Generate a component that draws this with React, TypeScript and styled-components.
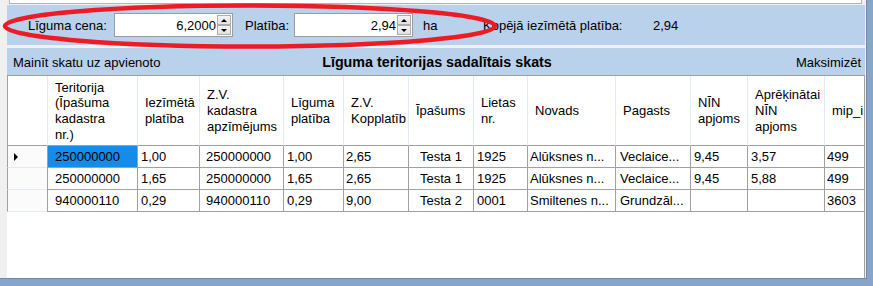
import React from "react";
import styled, { createGlobalStyle } from "styled-components";

const GlobalStyle = createGlobalStyle`
  html, body { margin: 0; padding: 0; }
  body {
    background: #87a5c9;
    font-family: "Liberation Sans", Arial, sans-serif;
    font-size: 13px;
    color: #000;
  }
`;

const COLS = "40px 90px 62px 84px 60px 65px 65px 54px 88px 75px 57px 77px 40px";

const Frame = styled.div`
  position: relative;
  width: 873px;
  height: 286px;
  box-sizing: border-box;
  padding: 0 6px 7px 0;
  background: #87a5c9;
  overflow: hidden;
`;

const Content = styled.div`
  height: 100%;
  box-sizing: border-box;
  background: #f0f0f0;
  border-right: 1px solid #6d8cb4;
  border-bottom: 1px solid #6d8cb4;
  display: flex;
  flex-direction: column;
`;

const TopBox = styled.div`
  flex: none;
  height: 4px;
  box-sizing: border-box;
  margin: 0 4px 0 9px;
  background: #fff;
  border: 1px solid #b4b4b4;
  border-top: none;
`;

const ParamBand = styled.div`
  flex: none;
  height: 40px;
  margin: 1px 1px 0 7px;
  padding-left: 21px;
  background: #b9d1ea;
  display: flex;
  align-items: center;
`;

const Label = styled.span<{ $w?: number; $ml?: number }>`
  flex: none;
  width: ${(p) => (p.$w ? `${p.$w}px` : "auto")};
  margin-left: ${(p) => p.$ml ?? 0}px;
  white-space: nowrap;
  line-height: 16px;
  padding-top: 2px;
`;

const Spin = styled.div<{ $ml?: number }>`
  flex: none;
  width: 119px;
  height: 24px;
  box-sizing: border-box;
  margin-left: ${(p) => p.$ml ?? 0}px;
  border: 1px solid #9c9c9c;
  background: #fff;
  display: flex;
`;

const SpinValue = styled.div`
  flex: 1;
  text-align: right;
  padding-right: 1px;
  line-height: 23px;
`;

const SpinButtons = styled.div`
  flex: none;
  width: 15px;
  display: flex;
  flex-direction: column;
  padding: 1px 1px 1px 0;
  box-sizing: border-box;
`;

const SpinBtn = styled.div`
  flex: 1;
  box-sizing: border-box;
  border: 1px solid #acacac;
  background: linear-gradient(#f4f4f4, #e1e1e1);
  display: flex;
  align-items: center;
  justify-content: center;
`;

const Arrow = styled.span<{ $up?: boolean }>`
  width: 0;
  height: 0;
  border-left: 3px solid transparent;
  border-right: 3px solid transparent;
  ${(p) => (p.$up ? "border-bottom: 3px solid #000;" : "border-top: 3px solid #000;")}
`;

const TitleBand = styled.div`
  flex: none;
  height: 27px;
  margin: 3px 1px 0 7px;
  padding: 0 4px 0 6px;
  background: #b9d1ea;
  display: grid;
  grid-template-columns: 1fr auto 1fr;
  align-items: center;
`;

const TitleLink = styled.span<{ $right?: boolean }>`
  white-space: nowrap;
  text-align: ${(p) => (p.$right ? "right" : "left")};
  padding-top: 1px;
`;

const Title = styled.span`
  font-weight: bold;
  font-size: 14.3px;
  white-space: nowrap;
  padding-top: 1px;
`;

const Grid = styled.div`
  flex: 1;
  margin: 0 1px 0 7px;
  background: #fff;
  border-top: 1px solid #a0a0a0;
  border-right: 1px solid #a0a0a0;
`;

const Row = styled.div<{ $h: number }>`
  display: grid;
  grid-template-columns: ${COLS};
  height: ${(p) => p.$h}px;
`;

const HeadCell = styled.div<{ $edge?: boolean }>`
  box-sizing: border-box;
  border-left: 1px solid ${(p) => (p.$edge ? "#a0a0a0" : "#e3eaf3")};
  border-bottom: 1px solid #a0a0a0;
  padding-left: 7px;
  display: flex;
  flex-direction: column;
  justify-content: center;
  overflow: hidden;
  white-space: nowrap;
  line-height: 15.7px;
  padding-top: 1px;
`;

const RowHead = styled.div`
  box-sizing: border-box;
  border-left: 1px solid #a0a0a0;
  border-bottom: 1px solid #e3eaf3;
  background: #fbfbfb;
  padding-left: 6px;
  display: flex;
  align-items: center;
`;

const Pointer = styled.span`
  width: 0;
  height: 0;
  border-top: 4px solid transparent;
  border-bottom: 4px solid transparent;
  border-left: 4px solid #000;
  margin-top: 1px;
`;

const Cell = styled.div<{ $pl: number; $center?: boolean; $sel?: boolean }>`
  box-sizing: border-box;
  border-left: 1px solid #a0a0a0;
  border-bottom: 1px solid #a0a0a0;
  background: ${(p) => (p.$sel ? "#168cea" : "#fff")};
  padding-left: ${(p) => (p.$center ? 0 : p.$pl)}px;
  text-align: ${(p) => (p.$center ? "center" : "left")};
  line-height: 22px;
  overflow: hidden;
  white-space: nowrap;
`;

const Annotation = styled.svg`
  position: absolute;
  left: 0;
  top: 0;
  width: 873px;
  height: 286px;
  pointer-events: none;
`;

const headers: string[][] = [
  ["Teritorija", "(Īpašuma", "kadastra", "nr.)"],
  ["Iezīmētā", "platība"],
  ["Z.V.", "kadastra", "apzīmējums"],
  ["Līguma", "platība"],
  ["Z.V.", "Kopplatīb"],
  ["Īpašums"],
  ["Lietas", "nr."],
  ["Novads"],
  ["Pagasts"],
  ["NĪN", "apjoms"],
  ["Aprēķinātai", "NĪN", "apjoms"],
  ["mip_i"],
];

const colCfg: { pl: number; center?: boolean }[] = [
  { pl: 7 },
  { pl: 3 },
  { pl: 6 },
  { pl: 3 },
  { pl: 2 },
  { pl: 0, center: true },
  { pl: 3 },
  { pl: 2 },
  { pl: 4 },
  { pl: 3 },
  { pl: 3 },
  { pl: 2 },
];

const rows: { current?: boolean; cells: string[] }[] = [
  {
    current: true,
    cells: ["250000000", "1,00", "250000000", "1,00", "2,65", "Testa 1", "1925", "Alūksnes n...", "Veclaice...", "9,45", "3,57", "499"],
  },
  {
    cells: ["250000000", "1,65", "250000000", "1,65", "2,65", "Testa 1", "1925", "Alūksnes n...", "Veclaice...", "9,45", "5,88", "499"],
  },
  {
    cells: ["940000110", "0,29", "940000110", "0,29", "9,00", "Testa 2", "0001", "Smiltenes n...", "Grundzāl...", "", "", "3603"],
  },
];

function NumericUpDown({ value, ml }: { value: string; ml?: number }) {
  return (
    <Spin $ml={ml}>
      <SpinValue>{value}</SpinValue>
      <SpinButtons>
        <SpinBtn>
          <Arrow $up />
        </SpinBtn>
        <SpinBtn>
          <Arrow />
        </SpinBtn>
      </SpinButtons>
    </Spin>
  );
}

export default function App() {
  return (
    <>
      <GlobalStyle />
      <Frame>
        <Content>
          <TopBox />
          <ParamBand>
            <Label $w={86}>Līguma cena:</Label>
            <NumericUpDown value="6,2000" />
            <Label $w={49} $ml={12}>Platība:</Label>
            <NumericUpDown value="2,94" />
            <Label $w={60} $ml={10}>ha</Label>
            <Label $w={170}>Kopējā iezīmētā platība:</Label>
            <Label>2,94</Label>
          </ParamBand>
          <TitleBand>
            <TitleLink>Mainīt skatu uz apvienoto</TitleLink>
            <Title>Līguma teritorijas sadalītais skats</Title>
            <TitleLink $right>Maksimizēt</TitleLink>
          </TitleBand>
          <Grid>
            <Row $h={70}>
              <HeadCell $edge />
              {headers.map((lines, i) => (
                <HeadCell key={i}>
                  {lines.map((l, j) => (
                    <span key={j}>{l}</span>
                  ))}
                </HeadCell>
              ))}
            </Row>
            {rows.map((r, ri) => (
              <Row $h={22} key={ri}>
                <RowHead>{r.current && <Pointer />}</RowHead>
                {r.cells.map((c, ci) => (
                  <Cell
                    key={ci}
                    $pl={colCfg[ci].pl}
                    $center={colCfg[ci].center}
                    $sel={r.current && ci === 0}
                  >
                    {c}
                  </Cell>
                ))}
              </Row>
            ))}
          </Grid>
        </Content>
        <Annotation viewBox="0 0 873 286">
          <ellipse cx="250" cy="26" rx="245" ry="20.5" fill="none" stroke="#ed1c24" strokeWidth="4.5" />
        </Annotation>
      </Frame>
    </>
  );
}
